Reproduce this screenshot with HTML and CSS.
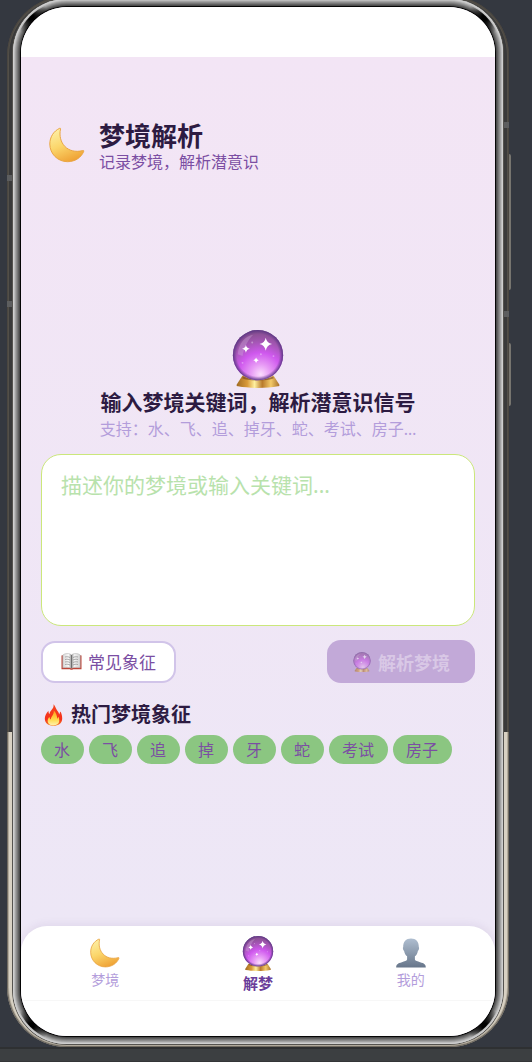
FILE: index.html
```html
<!DOCTYPE html>
<html lang="zh-CN">
<head>
<meta charset="utf-8">
<meta name="viewport" content="width=device-width, initial-scale=1">
<title>梦境解析</title>
<link rel="stylesheet" href="styles.css">
</head>
<body>
<svg class="defs" aria-hidden="true">
  <defs>
    <linearGradient id="moonFill" x1="0.2" y1="0" x2="0.6" y2="1">
      <stop offset="0" stop-color="#fdf0a8"/><stop offset="0.5" stop-color="#fbd66b"/><stop offset="1" stop-color="#efa235"/>
    </linearGradient>
    <radialGradient id="ballFill" cx="0.55" cy="0.88" r="0.9">
      <stop offset="0" stop-color="#fbdcfd"/><stop offset="0.22" stop-color="#e79af5"/><stop offset="0.48" stop-color="#cf58ee"/><stop offset="0.72" stop-color="#a456b4"/><stop offset="1" stop-color="#7d4d84"/>
    </radialGradient>
    <radialGradient id="ballRim" cx="0.5" cy="0.5" r="0.5">
      <stop offset="0.84" stop-color="#653b8c" stop-opacity="0"/><stop offset="1" stop-color="#5b3586" stop-opacity="0.95"/>
    </radialGradient>
    <linearGradient id="gold" x1="0" x2="1">
      <stop offset="0" stop-color="#a06b22"/><stop offset="0.25" stop-color="#d99a38"/><stop offset="0.42" stop-color="#fff0a0"/><stop offset="0.6" stop-color="#b97a2b"/><stop offset="0.8" stop-color="#f3ca69"/><stop offset="1" stop-color="#a8702a"/>
    </linearGradient>
    <linearGradient id="personFill" x1="0" y1="0" x2="0" y2="1">
      <stop offset="0" stop-color="#afbed0"/><stop offset="1" stop-color="#67768a"/>
    </linearGradient>
    <linearGradient id="flameOuter" x1="0" y1="0" x2="0" y2="1">
      <stop offset="0" stop-color="#f4451f"/><stop offset="0.7" stop-color="#f5301b"/><stop offset="1" stop-color="#f58a28"/>
    </linearGradient>
    <linearGradient id="flameInner" x1="0" y1="0" x2="0" y2="1">
      <stop offset="0" stop-color="#ff9d1c"/><stop offset="0.6" stop-color="#ffd84a"/><stop offset="1" stop-color="#fff3b0"/>
    </linearGradient>
    <linearGradient id="pageFill" x1="0" x2="1">
      <stop offset="0" stop-color="#d8d8d8"/><stop offset="0.35" stop-color="#fafafa"/><stop offset="0.5" stop-color="#8f8f8f"/><stop offset="0.65" stop-color="#f4f4f4"/><stop offset="1" stop-color="#d2d2d2"/>
    </linearGradient>
    <symbol id="moon" viewBox="0 0 36 36">
      <path d="M10.700 1.300C4.500 4.100.8 10.200.8 17c0 9.800 7.900 17.700 17.700 17.700 7.500 0 13.800-4.200 16.200-10.300.3-.8-.2-1-.9-.8C18.500 27.400 8.600 15.800 11.500 2c.1-.7-.2-.9-.8-.7z" fill="url(#moonFill)" stroke="#e9a544" stroke-width="1"/>
    </symbol>
    <symbol id="crystal" viewBox="0 0 54 60">
      <path d="M11 47h32l6 9.500c.5 1-.3 1.600-1.300 1.800C36 60.500 18 60.500 6.300 58.300c-1-.2-1.800-.8-1.300-1.800z" fill="url(#gold)"/>
      <path d="M11 49c7 3 25 3 32 0" fill="none" stroke="#6b3f25" stroke-width="2" opacity="0.6"/>
      <circle cx="27" cy="26" r="26" fill="url(#ballFill)"/>
      <circle cx="27" cy="26" r="26" fill="url(#ballRim)"/>
      <path d="M6 25C7 14 14 6 22 5 16 11 13 18 11 27z" fill="#dcc0e6" opacity="0.3"/>
      <g fill="#fff"><path d="M35 8q1 5.500 6.500 6.500Q36 15.500 35 21.500q-1-6-6.500-7Q34 13.500 35 8z"/><circle cx="35" cy="14.500" r="2.500"/><path d="M14.500 15.500q.7 3.300 4 4-3.300.7-4 4-.7-3.300-4-4 3.300-.7 4-4z"/><circle cx="14.500" cy="19.500" r="1.300"/><path d="M25 28.500q.5 2.300 2.800 2.800-2.300.5-2.800 2.800-.5-2.300-2.800-2.800 2.300-.5 2.800-2.800z"/><circle cx="25" cy="31.300" r="1"/><g opacity="0.35"><circle cx="21" cy="13" r="1"/><circle cx="30" cy="25" r="1"/><circle cx="43" cy="27" r="1"/><circle cx="11" cy="34" r="1"/></g></g>
    </symbol>
    <symbol id="person" viewBox="0 0 30 30">
      <path d="M15 .5c-5 0-8 3.300-7.800 8.500-.6.600-.4 3 .9 3.900.5 2.400 1.500 4.200 3 5.400v3.300c-.4 1.500-2.700 1.900-5.200 2.600C1.800 25.300.2 26.500.2 29.500h29.600c0-3-1.600-4.200-5.700-5.300-2.500-.7-4.800-1.100-5.200-2.600v-3.300c1.500-1.200 2.500-3 3-5.400 1.300-.9 1.500-3.300.9-3.900C23 3.800 20 .5 15 .5z" fill="url(#personFill)"/>
    </symbol>
    <symbol id="fire" viewBox="0 0 18 22">
      <path d="M9 .2c.5 2.600-.6 4.100-2 5.800C6 7.200 5.200 8.300 5 10 4.100 9.200 3.900 8 4 6.700 1.500 9.300.3 12 .3 14.800.4 19.200 3.900 21.900 9 21.900s8.600-2.700 8.700-7.100c.1-2.700-.6-5.100-1.600-7.300-.6.900-1 1.700-1.300 2.900C14.300 8.900 13.700 7.800 12.700 6.500 11.300 4.600 11 2.200 9 .2z" fill="url(#flameOuter)"/>
      <path d="M9.300 6.500c.3 2.700-.8 4.300-2 6-.7 1-1 2-.9 3-1-.6-1.400-1.500-1.500-2.700-1.300 1.500-1.900 3.100-1.700 4.800.4 2.500 2.700 3.900 5.800 3.900s5.500-1.500 5.800-4.400c.1-1.600-.3-3-.8-4.300-.5.700-.8 1.300-1.100 2.200-.5-3.300-1.300-6.300-3.600-8.500z" fill="url(#flameInner)"/>
    </symbol>
    <symbol id="book" viewBox="0 0 20 17">
      <path d="M0 2.500l2-.5v12.500h7.500l.5.600.5-.6H18V2l2 .5V16.200h-8.500c-.5.700-2.500.7-3 0H0z" fill="#bd4438"/>
      <path d="M1.300 2L3 1c3-.9 5.500-.5 7 1 1.500-1.500 4-1.900 7-1l1.700 1v12.800c-3.300-.9-6.500-.6-8.700.5-2.200-1.100-5.400-1.400-8.700-.5z" fill="url(#pageFill)" stroke="#aaa" stroke-width="0.500"/>
      <path d="M3.500 4c2-.5 3.500-.2 5 .5M3.500 6.500c2-.5 3.500-.2 5 .5M3.500 9c2-.5 3.500-.2 5 .5M3.500 11.500c2-.5 3.500-.2 5 .5M16.500 4c-2-.5-3.500-.2-5 .5M16.500 6.500c-2-.5-3.500-.2-5 .5M16.500 9c-2-.5-3.500-.2-5 .5M16.500 11.500c-2-.5-3.500-.2-5 .5" fill="none" stroke="#8a8a8a" stroke-width="0.700"/>
      <path d="M10 2v13" stroke="#666" stroke-width="0.800"/>
    </symbol>
  </defs>
</svg>
<div class="stage">
  <div class="phone">
    <span class="side-key key-upper"></span>
    <span class="side-key key-lower"></span>
    <span class="seam seam-left seam-a"></span>
    <span class="seam seam-left seam-c"></span>
    <span class="seam seam-right seam-b"></span>
    <span class="seam seam-right seam-d"></span>
    <div class="bezel">
      <div class="screen">
        <div class="status-bar"></div>
        <main class="page">
          <header class="page-header">
            <svg class="header-icon" aria-hidden="true"><use href="#moon"/></svg>
            <div>
              <h1 class="page-title">梦境解析</h1>
              <p class="page-subtitle">记录梦境，解析潜意识</p>
            </div>
          </header>
          <section class="hero">
            <svg class="hero-icon" aria-hidden="true"><use href="#crystal"/></svg>
            <h2 class="hero-title" id="dream-label">输入梦境关键词，解析潜意识信号</h2>
            <p class="hero-hint">支持：水、飞、追、掉牙、蛇、考试、房子…</p>
          </section>
          <form class="dream-form">
            <textarea class="dream-input" aria-labelledby="dream-label" placeholder="描述你的梦境或输入关键词..."></textarea>
            <div class="actions">
              <button class="btn btn-outline" type="button"><svg class="book-icon" aria-hidden="true"><use href="#book"/></svg>常见象征</button>
              <button class="btn btn-primary" type="submit" disabled><svg class="ball-icon" aria-hidden="true"><use href="#crystal"/></svg>解析梦境</button>
            </div>
          </form>
          <section>
            <h2 class="hot-title"><svg class="fire-icon" aria-hidden="true"><use href="#fire"/></svg>热门梦境象征</h2>
            <div class="chips">
              <button class="chip" type="button">水</button>
              <button class="chip" type="button">飞</button>
              <button class="chip" type="button">追</button>
              <button class="chip" type="button">掉</button>
              <button class="chip" type="button">牙</button>
              <button class="chip" type="button">蛇</button>
              <button class="chip" type="button">考试</button>
              <button class="chip" type="button">房子</button>
            </div>
          </section>
        </main>
        <nav class="tab-bar">
          <a class="tab" href="#"><svg class="tab-icon" aria-hidden="true"><use href="#moon"/></svg>梦境</a>
          <a class="tab tab-active" href="#" aria-current="page"><svg class="tab-icon" aria-hidden="true"><use href="#crystal"/></svg>解梦</a>
          <a class="tab" href="#"><svg class="tab-icon" aria-hidden="true"><use href="#person"/></svg>我的</a>
        </nav>
        <div class="home-area"></div>
      </div>
    </div>
  </div>
  <div class="tool-strip"></div>
</div>
</body>
</html>
```
FILE: styles.css
```css
* { box-sizing: border-box; }

body {
  margin: 0;
  background: #343840;
  font-family: "Noto Sans", "Noto Sans CJK SC", sans-serif;
}

h1, h2, p { margin: 0; }
button, textarea { font-family: inherit; }
.defs { position: absolute; width: 0; height: 0; }

.stage {
  display: flex;
  flex-direction: column;
  min-height: 100vh;
  overflow: hidden;
}

/* phone casing */
.phone {
  position: relative;
  flex: 1;
  display: flex;
  margin: -4px 23px 0 7px;
  padding: 3px 6px;
  border-radius: 60px;
  background: linear-gradient(#3a3a3a 70%, #d8d1c3 70%);
  box-shadow: inset 0 0 0 1px rgb(70 65 58 / 60%), inset 0 0 0 2px rgb(120 112 98 / 40%);
}

.bezel {
  position: relative;
  flex: 1;
  display: flex;
  min-width: 0;
  padding: 8px;
  border-radius: 54px;
  background: #4b4b4b;
  box-shadow: 0 0 0 1px #55534f, inset 0 0 0 1px #cfcfcf, inset 0 0 0 2px #bcbcbc, inset 0 0 0 3px #a2a2a2, inset 0 0 0 4px #8c8c8c, inset 0 0 0 5px #777, inset 0 0 0 6px #606060, inset 0 0 0 7px #4b4b4b;
}

.bezel::before {
  content: "";
  position: absolute;
  inset: 2px;
  border-radius: 52px;
  background:
    radial-gradient(circle at 16px 16px, #000 3px, transparent 18px),
    radial-gradient(circle at calc(100% - 16px) 16px, #000 3px, transparent 18px),
    radial-gradient(circle at 16px calc(100% - 16px), #000 3px, transparent 18px),
    radial-gradient(circle at calc(100% - 16px) calc(100% - 16px), #000 3px, transparent 18px);
}

.side-key {
  position: absolute;
  left: 100%;
  width: 2px;
  background: #77756f;
  border-radius: 0 2px 2px 0;
}
.key-upper { top: 15%; height: 13%; }
.key-lower { top: 33%; height: 6%; }

.seam {
  position: absolute;
  width: 5px;
  height: 6px;
  background: #5d5e5f;
}
.seam-left { left: 0; }
.seam-right { right: 0; }
.seam-a { top: 17%; }
.seam-b { top: 12%; }
.seam-c { top: 29%; }
.seam-d { top: 30%; }

.screen {
  position: relative;
  flex: 1;
  display: flex;
  flex-direction: column;
  min-width: 0;
  overflow: hidden;
  border-radius: 46px;
  background: #ede7f5;
  box-shadow: 0 0 0 1px #050505;
}

.status-bar { height: 50px; background: #fff; }

.page {
  flex: 1;
  padding: 61px 20px 0;
  background: linear-gradient(#f3e5f5, #ede7f6);
}

.page-header {
  display: flex;
  align-items: center;
  gap: 14px;
  padding-left: 8px;
}
.header-icon { width: 36px; height: 36px; margin-top: 2px; }
.page-title { color: #2d1b42; font-size: 26px; line-height: 36px; }
.page-subtitle { color: #7b4ea3; font-size: 16px; line-height: 16px; }

.hero {
  display: flex;
  flex-direction: column;
  align-items: center;
  padding-top: 160px;
  text-align: center;
}
.hero-icon { width: 54px; height: 58px; }
.hero-title { color: #2d1b42; font-size: 21px; line-height: 28px; }
.hero-hint { color: #b39ddb; font-size: 16px; line-height: 26px; }

.dream-form { padding-top: 12px; }
.dream-input {
  display: block;
  width: 100%;
  height: 172px;
  padding: 15px 19px;
  border: 1px solid #cbe77b;
  border-radius: 20px;
  background: #fff;
  color: #2d1b42;
  font-size: 21px;
  line-height: 30px;
  resize: none;
}
.dream-input::placeholder { color: #b8e2ac; opacity: 1; }

.actions {
  display: flex;
  align-items: center;
  justify-content: space-between;
  padding-top: 14px;
}
.btn {
  display: flex;
  align-items: center;
  gap: 6px;
  border-radius: 14px;
}
.btn-outline {
  height: 42px;
  padding: 0 18px;
  border: 2px solid #d1c4e9;
  background: #fff;
  color: #7b4ea3;
  font-size: 17px;
}
.btn-primary {
  height: 43px;
  padding: 0 25px;
  border: 0;
  background: #c2a9d8;
  color: #d9c8e6;
  font-size: 18px;
  font-weight: 700;
}
.book-icon { width: 21px; height: 17px; }
.ball-icon { width: 20px; height: 20px; opacity: 0.55; }

.hot-title {
  display: flex;
  align-items: center;
  gap: 8px;
  padding: 18px 0 6px 3px;
  color: #2d1b42;
  font-size: 20px;
  line-height: 28px;
}
.fire-icon { width: 19px; height: 22px; }

.chips { display: flex; flex-wrap: wrap; gap: 5px; }
.chip {
  height: 29px;
  padding: 0 14px 0 13px;
  border: 0;
  border-radius: 15px;
  background: #8bc681;
  color: #7b4ea3;
  font-size: 16px;
  line-height: 28px;
}

.tab-bar {
  display: flex;
  height: 75px;
  padding: 0 8px;
  border-bottom: 1px solid #f7f7f7;
  border-radius: 26px 26px 0 0;
  background: #fff;
  box-shadow: 0 -2px 8px rgb(80 40 120 / 8%);
}
.tab {
  flex: 1;
  display: flex;
  flex-direction: column;
  align-items: center;
  padding-top: 12px;
  color: #b39ddb;
  font-size: 14px;
  line-height: 24px;
  text-decoration: none;
}
.tab-icon { width: 30px; height: 30px; }
.tab-active {
  padding-top: 10px;
  color: #6a3d9a;
  font-size: 15px;
  font-weight: 700;
}
.tab-active .tab-icon { width: 34px; height: 35px; }

.home-area { height: 35px; background: #fff; }

.tool-strip {
  height: 15px;
  border-top: 2px solid #2e3032;
  border-bottom: 1px solid #333537;
  background: #3c3f41;
}
```
